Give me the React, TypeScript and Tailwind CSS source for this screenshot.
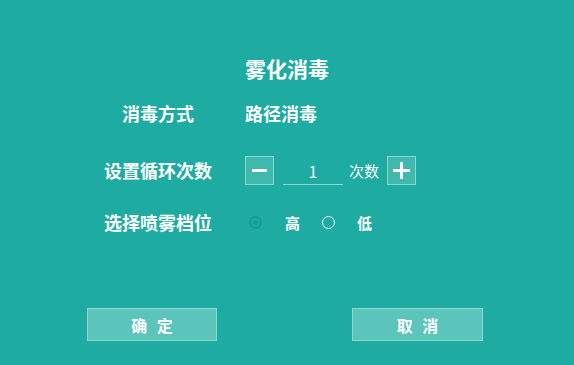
import React from "react";

export default function App() {
  return (
    <div className="w-[574px] h-[365px] bg-[#1eaba1] flex flex-col text-white font-['Noto_Sans_CJK_SC','Noto_Sans',sans-serif] overflow-hidden">
      <div className="mt-[54px] h-[28px] flex items-center justify-center text-[21px] font-bold leading-none">
        雾化消毒
      </div>

      <div className="mt-[16px] h-[30px] flex items-center">
        <div className="ml-[88px] w-[140px] text-center text-[18px] font-bold leading-none">消毒方式</div>
        <div className="ml-[17px] text-[18px] font-bold leading-none">路径消毒</div>
      </div>

      <div className="mt-[27px] h-[30px] flex items-center">
        <div className="ml-[88px] w-[140px] text-center text-[18px] font-bold leading-none">设置循环次数</div>
        <div className="ml-[17px] flex items-center">
          <button className="w-[29px] h-[29px] border border-[#8fd6cf] bg-[#3fb8ae] flex items-center justify-center">
            <span className="block w-[15px] h-[3px] bg-white" />
          </button>
          <div className="ml-[9px] w-[60px] h-[29px] border-b border-[#8fd6cf] flex items-center justify-center text-[16px] leading-none pt-[2px]">
            1
          </div>
          <div className="ml-[6px] w-[32px] text-[15px] leading-none">次数</div>
          <button className="ml-[6px] w-[29px] h-[29px] border border-[#8fd6cf] bg-[#3fb8ae] flex items-center justify-center relative">
            <span className="block w-[17px] h-[3px] bg-white" />
            <span className="absolute w-[3px] h-[17px] bg-white" />
          </button>
        </div>
      </div>

      <div className="mt-[22px] h-[30px] flex items-center">
        <div className="ml-[88px] w-[140px] text-center text-[18px] font-bold leading-none">选择喷雾档位</div>
        <div className="ml-[17px] flex items-center">
          <span className="ml-[4px] w-[13px] h-[13px] rounded-full border-[2px] border-[#199a91] flex items-center justify-center">
            <span className="w-[5px] h-[5px] rounded-full bg-[#199a91]" />
          </span>
          <span className="ml-[23px] text-[15px] font-bold leading-none">高</span>
          <span className="ml-[22px] w-[13px] h-[13px] rounded-full border-[1.5px] border-white" />
          <span className="ml-[22px] text-[15px] font-bold leading-none">低</span>
        </div>
      </div>

      <div className="mt-[71px] flex items-center">
        <button className="ml-[87px] w-[130px] h-[33px] border border-[#8fd6cf] bg-[#5bc4bb] text-[16px] font-bold leading-none tracking-[3px] pl-[3px]">
          确 定
        </button>
        <button className="ml-[135px] w-[131px] h-[33px] border border-[#8fd6cf] bg-[#5bc4bb] text-[16px] font-bold leading-none tracking-[3px] pl-[3px]">
          取 消
        </button>
      </div>
    </div>
  );
}
